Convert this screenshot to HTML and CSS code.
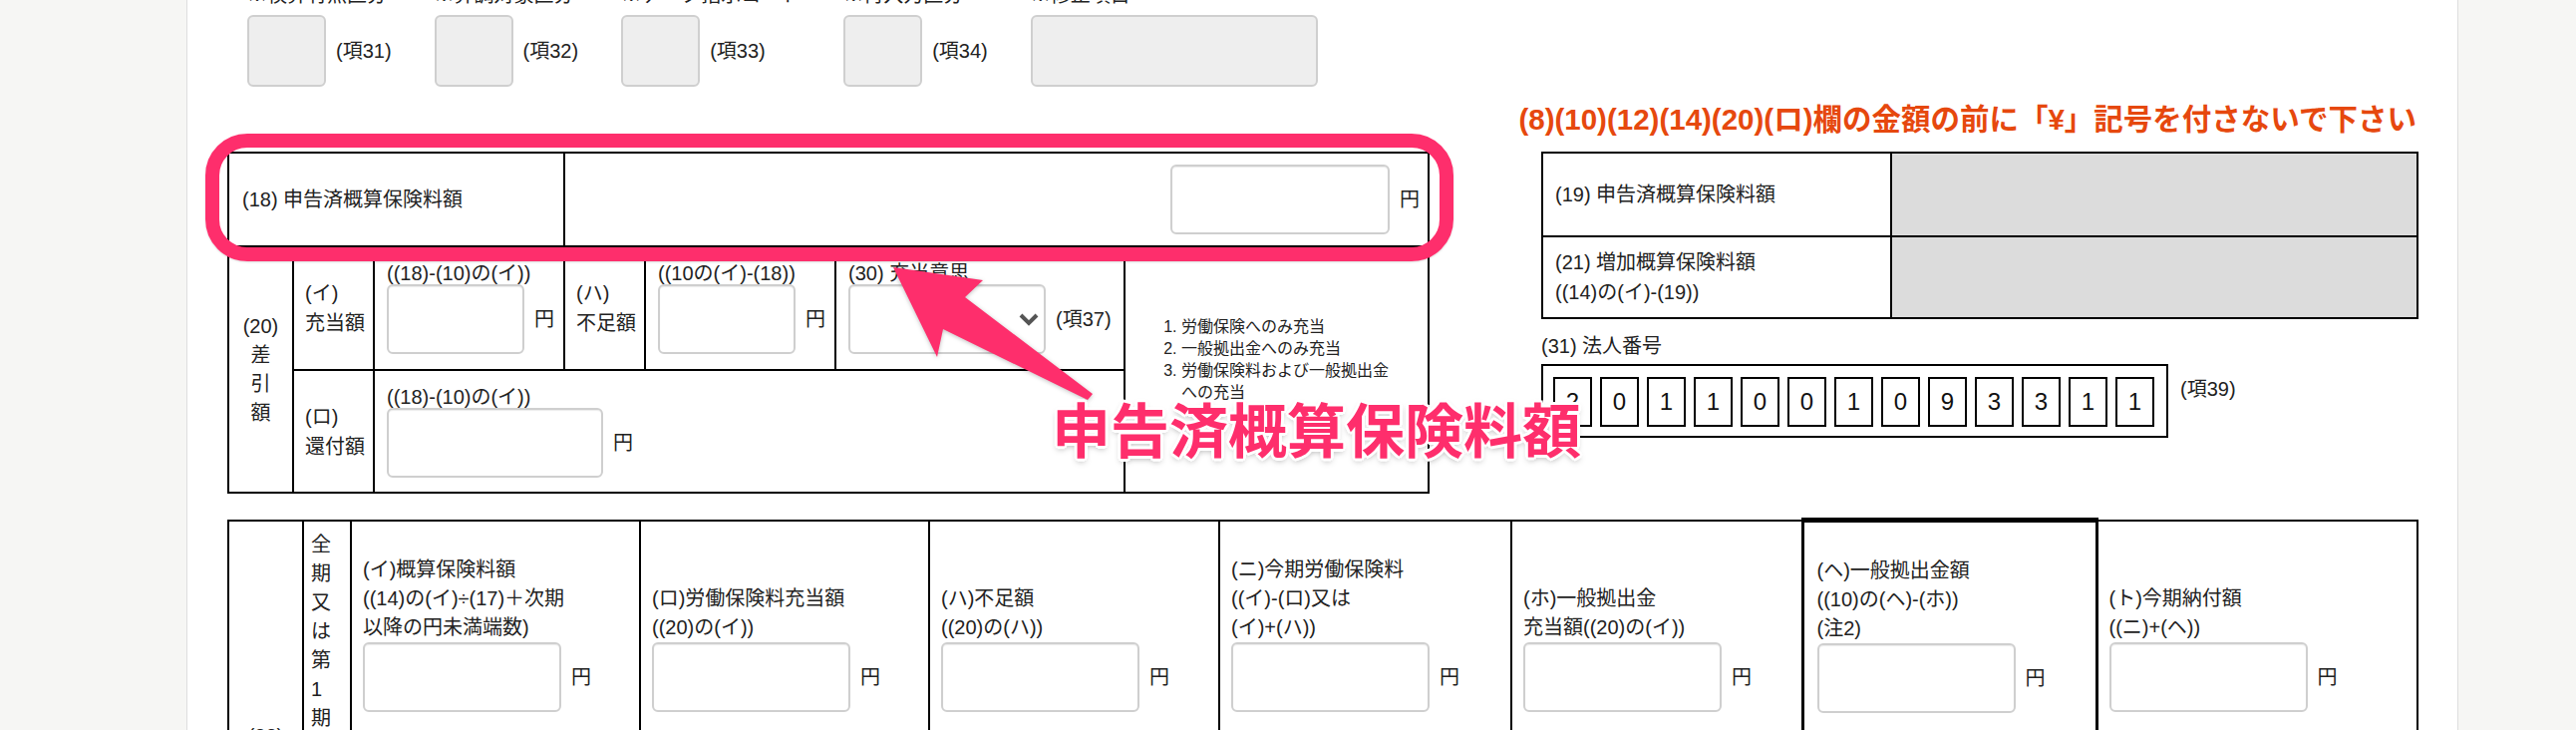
FILE: index.html
```html
<!DOCTYPE html>
<html lang="ja">
<head>
<meta charset="utf-8">
<title>申告書</title>
<link rel="stylesheet" href="styles.css">
</head>
<body>
<div class="page">
  <div class="fields">
    <div class="field">
      <div class="field-label">※検算有無区分</div>
      <div class="field-row"><div class="dis-box"></div><span>(項31)</span></div>
    </div>
    <div class="field">
      <div class="field-label">※算調対象区分</div>
      <div class="field-row"><div class="dis-box"></div><span>(項32)</span></div>
    </div>
    <div class="field">
      <div class="field-label">※データ指示コード</div>
      <div class="field-row"><div class="dis-box"></div><span>(項33)</span></div>
    </div>
    <div class="field">
      <div class="field-label">※再入力区分</div>
      <div class="field-row"><div class="dis-box"></div><span>(項34)</span></div>
    </div>
    <div class="field">
      <div class="field-label">※修正項目</div>
      <div class="field-row"><div class="dis-box wide"></div></div>
    </div>
  </div>

  <p class="note">(8)(10)(12)(14)(20)(ロ)欄の金額の前に「¥」記号を付さないで下さい</p>

  <div class="upper">
    <table class="tbl t18">
      <colgroup>
        <col class="c65"><col class="c81"><col class="c191"><col class="c81"><col class="c191"><col class="c290"><col class="c305">
      </colgroup>
      <tr class="r18">
        <td colspan="3" class="lab18">(18) 申告済概算保険料額</td>
        <td colspan="4" class="right"><div class="amt end"><div class="inp w220"></div><span>円</span></div></td>
      </tr>
      <tr class="ri">
        <td rowspan="2" class="center">(20)<br>差<br>引<br>額</td>
        <td class="sub">(イ)<br>充当額</td>
        <td><div class="lbl">((18)-(10)の(イ))</div><div class="amt"><div class="inp w138"></div><span>円</span></div></td>
        <td class="sub">(ハ)<br>不足額</td>
        <td><div class="lbl">((10の(イ)-(18))</div><div class="amt"><div class="inp w138"></div><span>円</span></div></td>
        <td><div class="lbl">(30) 充当意思</div><div class="amt"><div class="inp sel"><svg viewBox="0 0 20 13"><path d="M2 2 L10 10 L18 2" fill="none" stroke="#555" stroke-width="4"/></svg></div><span>(項37)</span></div></td>
        <td rowspan="2" class="notes">
          <ol>
            <li>労働保険へのみ充当</li>
            <li>一般拠出金へのみ充当</li>
            <li>労働保険料および一般拠出金への充当</li>
          </ol>
        </td>
      </tr>
      <tr class="rro">
        <td class="sub">(ロ)<br>還付額</td>
        <td colspan="4"><div class="lbl">((18)-(10)の(イ))</div><div class="amt"><div class="inp w217"></div><span>円</span></div></td>
      </tr>
    </table>

    <div class="rightcol">
      <table class="tbl t19">
        <colgroup><col class="c350"><col class="c528"></colgroup>
        <tr class="r19">
          <td>(19) 申告済概算保険料額</td>
          <td class="gray"></td>
        </tr>
        <tr class="r21">
          <td>(21) 増加概算保険料額<br>((14)の(イ)-(19))</td>
          <td class="gray"></td>
        </tr>
      </table>
      <div class="corp-label">(31) 法人番号</div>
      <div class="corp-row">
        <div class="corp">
          <span class="digit">2</span><span class="digit">0</span><span class="digit">1</span><span class="digit">1</span><span class="digit">0</span><span class="digit">0</span><span class="digit">1</span><span class="digit">0</span><span class="digit">9</span><span class="digit">3</span><span class="digit">3</span><span class="digit">1</span><span class="digit">1</span>
        </div>
        <span class="item">(項39)</span>
      </div>
    </div>
  </div>

  <table class="tbl t22">
    <colgroup>
      <col class="c75"><col class="c48"><col class="c290"><col class="c290"><col class="c291"><col class="c293"><col class="c292"><col class="c295"><col class="c322">
    </colgroup>
    <tr class="r22">
      <td class="no">(22)</td>
      <td class="vert"><div class="vtext">全期又は第1期分</div></td>
      <td><div class="blabel">(イ)概算保険料額<br>((14)の(イ)÷(17)＋次期<br>以降の円未満端数)</div><div class="amt"><div class="inp w199"></div><span>円</span></div></td>
      <td><div class="blabel">(ロ)労働保険料充当額<br>((20)の(イ))</div><div class="amt"><div class="inp w199"></div><span>円</span></div></td>
      <td><div class="blabel">(ハ)不足額<br>((20)の(ハ))</div><div class="amt"><div class="inp w199"></div><span>円</span></div></td>
      <td><div class="blabel">(ニ)今期労働保険料<br>((イ)-(ロ)又は<br>(イ)+(ハ))</div><div class="amt"><div class="inp w199"></div><span>円</span></div></td>
      <td><div class="blabel">(ホ)一般拠出金<br>充当額((20)の(イ))</div><div class="amt"><div class="inp w199"></div><span>円</span></div></td>
      <td class="thick"><div class="blabel">(ヘ)一般拠出金額<br>((10)の(ヘ)-(ホ))<br>(注2)</div><div class="amt"><div class="inp w199"></div><span>円</span></div></td>
      <td><div class="blabel">(ト)今期納付額<br>((ニ)+(ヘ))</div><div class="amt"><div class="inp w199"></div><span>円</span></div></td>
    </tr>
  </table>
</div>

<div class="frame"></div>
<svg class="arrow" viewBox="0 0 230 160">
  <polygon points="16,13 106,26 88,43 216,140 211,146 66,75 60,103" fill="#fe2e6c"/>
</svg>
<div class="callout">申告済概算保険料額</div>
</body>
</html>
```

FILE: styles.css
```css
* { box-sizing: border-box; }
html, body { margin: 0; }
body {
  position: relative;
  background: #f6f6f4;
  font-family: "Liberation Sans", "Noto Sans CJK JP", sans-serif;
  color: #222;
  overflow: hidden;
  height: 732px;
}
.page {
  margin-left: 187px;
  margin-top: -17px;
  width: 2279px;
  min-height: 1100px;
  background: #fff;
  border-left: 1px solid #dedede;
  border-right: 1px solid #dedede;
  padding: 0 41px 40px 40px;
}

/* top disabled fields */
.fields { display: flex; gap: 43px; margin-left: 20px; }
.field-label { font-size: 20px; line-height: 24px; margin-bottom: 8px; white-space: nowrap; }
.field-row { display: flex; align-items: center; gap: 10px; font-size: 20px; line-height: 24px; }
.dis-box { width: 79px; height: 72px; background: #eee; border: 2px solid #cfcfcf; border-radius: 6px; }
.dis-box.wide { width: 288px; }

.note {
  margin: 16px 0 15px;
  text-align: right;
  color: #e6480e;
  font-weight: 700;
  font-size: 29.5px;
  line-height: 34px;
}

.upper { display: flex; justify-content: space-between; align-items: flex-start; }

/* tables */
.tbl { border-collapse: collapse; table-layout: fixed; }
.tbl td {
  border: 2px solid #000;
  font-size: 20px;
  line-height: 30px;
  vertical-align: middle;
  padding: 0 6px 0 11px;
}
.c65 { width: 65px; } .c81 { width: 81px; } .c191 { width: 191px; }
.c290 { width: 290px; } .c305 { width: 305px; } .c350 { width: 350px; }
.c528 { width: 528px; } .c75 { width: 75px; } .c48 { width: 48px; }
.c291 { width: 291px; } .c293 { width: 293px; } .c292 { width: 292px; }
.c295 { width: 295px; } .c322 { width: 322px; }

.t18 { width: 1204px; }
.t18 .r18 { height: 94px; }
.t18 .ri { height: 124px; }
.t18 .rro { height: 123px; }
.t18 td.lab18 { padding-left: 13px; }
.t18 td.right { padding-right: 8px; }
.t18 td.center { text-align: center; padding: 0; line-height: 29px; }
.t18 td.sub { padding-left: 11px; }
.t18 td + td:not(.sub):not(.notes) { padding-left: 12px; }

.lbl { line-height: 22px; white-space: nowrap; }
.amt { display: flex; align-items: center; gap: 10px; white-space: nowrap; }
.amt.end { justify-content: flex-end; }
.inp {
  height: 70px;
  border: 2px solid #cfcfcf;
  border-radius: 6px;
  background: #fff;
  box-shadow: inset 0 1px 1px rgba(0, 0, 0, 0.08);
  flex: none;
}
.w220 { width: 220px; }
.w138 { width: 138px; }
.w217 { width: 217px; }
.w199 { width: 199px; }
.sel { width: 198px; display: flex; align-items: center; justify-content: flex-end; padding-right: 5px; }
.sel svg { width: 20px; height: 13px; display: block; }

.t18 td.notes { padding: 0 30px 20px 16px; }
.notes ol { margin: 0; padding-left: 40px; font-size: 16px; line-height: 22px; }

.rightcol { width: 878px; }
.t19 { width: 878px; }
.t19 .r19 { height: 84px; }
.t19 .r21 { height: 82px; }
.t19 td { padding-left: 12px; }
.t19 td.gray { background: #dcdcdc; }

.corp-label { margin-top: 15px; font-size: 20px; line-height: 24px; }
.corp-row { display: flex; align-items: flex-start; gap: 12px; margin-top: 6px; }
.corp { display: flex; gap: 8px; border: 2px solid #000; padding: 11px 12px 9px 10px; }
.digit {
  width: 39px;
  height: 50px;
  border: 2px solid #000;
  display: flex;
  align-items: center;
  justify-content: center;
  font-size: 24px;
  color: #111;
}
.corp-row .item { margin-top: 13px; font-size: 20px; line-height: 24px; }

/* bottom table */
.t22 { width: 2196px; margin-top: 24px; }
.t22 .r22 { height: 432px; }
.t22 td { vertical-align: top; padding: 34px 6px 0 11px; }
.t22 td.no { vertical-align: middle; text-align: center; padding: 0; }
.t22 td.vert { padding: 9px 0 0 7px; }
.vtext { width: 20px; line-height: 29px; word-break: break-all; }
.t22 td.thick { border: 3px solid #000; border-top-width: 5px; padding-left: 13px; }
.blabel {
  height: 87px;
  display: flex;
  flex-direction: column;
  justify-content: flex-end;
  line-height: 29px;
  white-space: nowrap;
}

/* annotation overlays */
.frame {
  position: absolute;
  left: 206px;
  top: 134px;
  width: 1252px;
  height: 128px;
  border: 14px solid #fe2e6c;
  border-radius: 42px;
  box-shadow: 0 1px 2px rgba(0, 0, 0, 0.15);
}
.arrow {
  position: absolute;
  left: 880px;
  top: 255px;
  width: 230px;
  height: 160px;
  filter: drop-shadow(0 1px 2px rgba(0, 0, 0, 0.25));
}
.callout {
  position: absolute;
  left: 1055px;
  top: 399px;
  font-family: "Noto Sans CJK JP", sans-serif;
  font-size: 59px;
  line-height: 59px;
  font-weight: 700;
  color: #fe2e6c;
  white-space: nowrap;
  text-shadow:
    3px 0 #fff, -3px 0 #fff, 0 3px #fff, 0 -3px #fff,
    2px 2px #fff, -2px -2px #fff, 2px -2px #fff, -2px 2px #fff,
    0 3px 6px rgba(0, 0, 0, 0.35);
}
```
